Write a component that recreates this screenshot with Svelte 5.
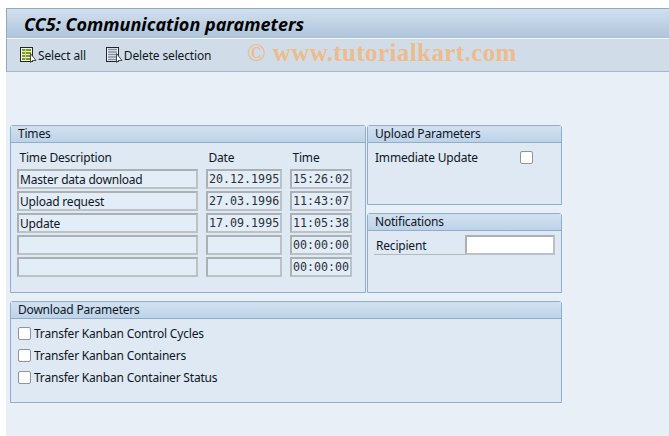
<script lang="ts">
  const rows = [
    { desc: 'Master data download', date: '20.12.1995', time: '15:26:02' },
    { desc: 'Upload request', date: '27.03.1996', time: '11:43:07' },
    { desc: 'Update', date: '17.09.1995', time: '11:05:38' },
    { desc: '', date: '', time: '00:00:00' },
    { desc: '', date: '', time: '00:00:00' }
  ];
  const transfers = [
    'Transfer Kanban Control Cycles',
    'Transfer Kanban Containers',
    'Transfer Kanban Container Status'
  ];
</script>

<div class="screen">
  <div class="title">CC5: Communication parameters</div>
  <div class="toolbar">
    <button class="tool">
      <svg width="17" height="17" viewBox="0 0 17 17">
        <rect x="0.5" y="0.5" width="12" height="14" fill="#f1f4e6" stroke="#1f2a22" />
        <path d="M2 2h9v2H2zM2 5h9v2H2zM2 8h9v2H2zM2 11h9v2H2z" fill="#7d9a1c" />
        <path d="M5 2h1v11H5z" fill="#c8d88a" />
        <path d="M10.5 6.5v9l2.2-2h3.3z" fill="#fff" stroke="#20262c" stroke-width="0.8" />
      </svg>
      Select all
    </button>
    <button class="tool second">
      <svg width="17" height="17" viewBox="0 0 17 17">
        <rect x="0.5" y="0.5" width="12" height="14" fill="#eef2f6" stroke="#20262c" />
        <path d="M2 2.5h9M2 5h9M2 7.5h9M2 10h9M2 12.5h9" stroke="#7f90a2" stroke-width="1.3" />
        <path d="M10.5 6.5v9l2.2-2h3.3z" fill="#fff" stroke="#20262c" stroke-width="0.8" />
      </svg>
      Delete selection
    </button>
    <span class="watermark">© www.tutorialkart.com</span>
  </div>

  <div class="content">
    <div class="top">
      <section class="group times">
        <h2>Times</h2>
        <div class="times-grid">
          <span class="head">Time Description</span>
          <span class="head">Date</span>
          <span class="head">Time</span>
          {#each rows as row}
            <div class="field">{row.desc}</div>
            <div class="field mono">{row.date}</div>
            <div class="field mono">{row.time}</div>
          {/each}
        </div>
      </section>

      <div class="side">
        <section class="group upload">
          <h2>Upload Parameters</h2>
          <div class="upload-row">
            <span class="upload-label">Immediate Update</span>
            <span class="check"></span>
          </div>
        </section>
        <section class="group notify">
          <h2>Notifications</h2>
          <div class="recipient">
            <span class="recipient-label">Recipient</span>
            <div class="field open"></div>
          </div>
        </section>
      </div>
    </div>

    <section class="group download">
      <h2>Download Parameters</h2>
      <div class="transfers">
        {#each transfers as label}
          <div class="transfer">
            <span class="check"></span>
            <span>{label}</span>
          </div>
        {/each}
      </div>
    </section>
  </div>
</div>

<style>
  :global(body) {
    margin: 0;
    background: #fff;
  }

  .screen {
    box-sizing: border-box;
    height: 436px;
    margin-left: 6px;
    padding-top: 8px;
    font-family: "Noto Sans", "Open Sans", sans-serif;
    font-size: 12px;
    letter-spacing: -0.2px;
    color: #10161f;
    display: flex;
    flex-direction: column;
    overflow: hidden;
  }

  .title {
    box-sizing: border-box;
    height: 31px;
    padding: 3px 0 0 17px;
    font-size: 18px;
    font-weight: bold;
    font-style: italic;
    letter-spacing: 0;
    color: #000;
    background: linear-gradient(#d2e0ee, #adc4da);
    border-top: 1px solid #93a9c0;
    border-left: 1px solid #93a9c0;
    border-bottom: 1px solid #f3f7fb;
  }

  .toolbar {
    box-sizing: border-box;
    height: 33px;
    display: flex;
    align-items: center;
    background: #d0dde8;
    border-left: 1px solid #93a9c0;
    border-bottom: 1px solid #a3b7cc;
    padding-left: 13px;
    position: relative;
  }

  .tool {
    display: flex;
    align-items: center;
    gap: 1px;
    padding: 0;
    border: 0;
    background: none;
    font: inherit;
    letter-spacing: -0.15px;
    color: inherit;
  }

  .second {
    margin-left: 20px;
  }

  .watermark {
    position: absolute;
    left: 240px;
    top: 0;
    font-family: "Liberation Serif", serif;
    font-size: 25px;
    font-weight: bold;
    color: #ecbc8c;
    letter-spacing: 0.4px;
  }

  .content {
    flex: 1;
    background: #e8eff7;
    padding: 53px 0 0 4px;
    display: flex;
    flex-direction: column;
    gap: 8px;
  }

  .top {
    display: flex;
    gap: 1px;
  }

  .group {
    box-sizing: border-box;
    background: #dee9f4;
    border: 1px solid #8fadcc;
    border-radius: 3px 3px 0 0;
  }

  h2 {
    box-sizing: border-box;
    height: 17px;
    margin: 0;
    padding: 0 0 0 7px;
    font-size: inherit;
    font-weight: normal;
    line-height: 16px;
    background: linear-gradient(#d2e1f0, #bdd3e9);
    border-bottom: 1px solid #8fadcc;
  }

  .times {
    width: 356px;
    height: 168px;
  }

  .times-grid {
    display: grid;
    grid-template-columns: 181px 76px 62px;
    column-gap: 8px;
    row-gap: 2px;
    padding: 7px 0 0 6px;
  }

  .head {
    height: 17px;
    line-height: 16px;
    padding-left: 2.5px;
  }

  .field {
    box-sizing: border-box;
    height: 20px;
    line-height: 18px;
    padding-left: 1px;
    background: #e3edf7;
    border: 2px solid #bcc1c5;
    border-top-color: #abb0b5;
    border-left-color: #abb0b5;
    overflow: hidden;
    white-space: nowrap;
  }

  .mono {
    font-family: "DejaVu Sans Mono", "Liberation Mono", monospace;
    font-size: 11.67px;
    line-height: 17px;
    letter-spacing: 0;
    padding-left: 1px;
    color: #2b3038;
  }

  .side {
    width: 195px;
    display: flex;
    flex-direction: column;
    gap: 8px;
  }

  .upload {
    height: 80px;
  }

  .notify {
    height: 80px;
  }

  .upload-row {
    display: flex;
    align-items: center;
    padding: 6px 0 0 7px;
  }

  .upload-label {
    width: 145px;
  }

  .check {
    box-sizing: border-box;
    display: block;
    flex: none;
    width: 13px;
    height: 13px;
    background: #fff;
    border: 1px solid #8e9499;
    border-radius: 2px;
  }

  .recipient {
    display: flex;
    align-items: flex-end;
    padding: 4px 0 0 6px;
  }

  .recipient-label {
    box-sizing: border-box;
    width: 91px;
    height: 20px;
    line-height: 22px;
    padding-left: 2px;
    border-bottom: 1px solid #b4b9be;
  }

  .open {
    width: 90px;
    background: #fff;
  }

  .download {
    width: 552px;
    height: 102px;
  }

  .transfers {
    display: flex;
    flex-direction: column;
    gap: 6px;
    padding: 6px 0 0 7px;
  }

  .transfer {
    height: 16px;
    display: flex;
    align-items: center;
    gap: 3px;
  }
</style>
